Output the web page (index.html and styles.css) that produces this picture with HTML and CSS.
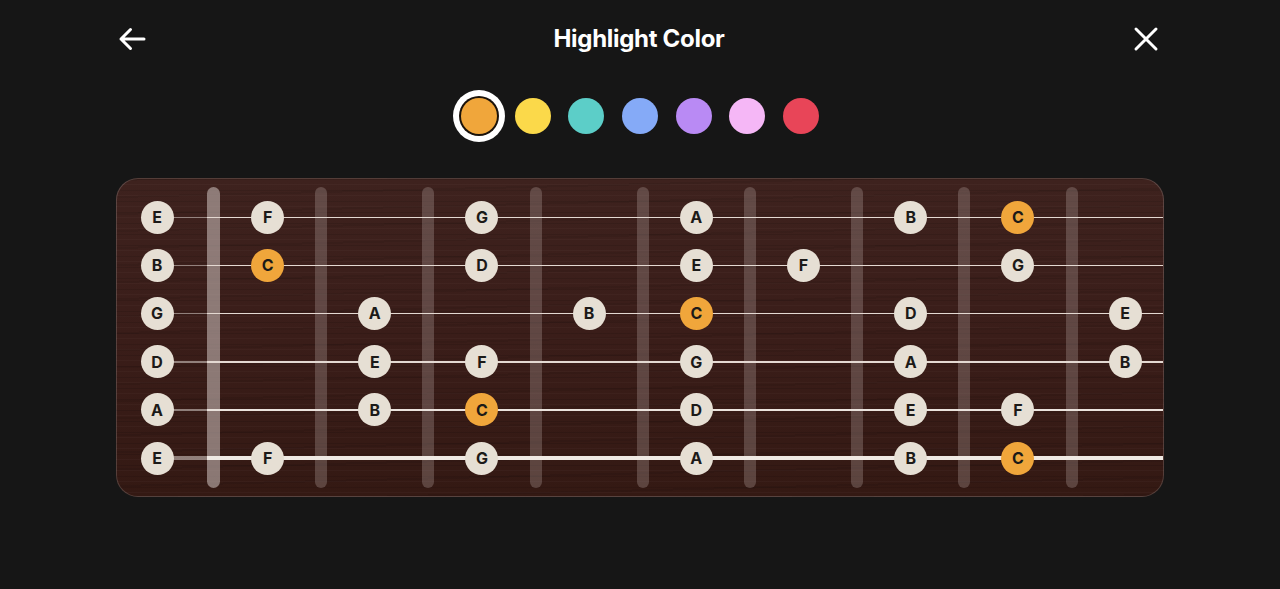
FILE: index.html
```html
<!DOCTYPE html>
<html lang="en">
<head>
<meta charset="utf-8">
<title>Highlight Color</title>
<link rel="stylesheet" href="styles.css">
</head>
<body>
<div class="screen">
  <header class="topbar">
    <button class="icon-btn" aria-label="Back">
      <svg width="30" height="26" viewBox="0 0 30 26"><path d="M27 13H4M13.5 3.5L4 13l9.5 9.5" fill="none" stroke="#fff" stroke-width="3" stroke-linecap="round" stroke-linejoin="round"/></svg>
    </button>
    <h1 class="title">Highlight Color</h1>
    <button class="icon-btn" aria-label="Close">
      <svg width="26" height="26" viewBox="0 0 26 26"><path d="M3 3l20 20M23 3L3 23" fill="none" stroke="#fff" stroke-width="3" stroke-linecap="round"/></svg>
    </button>
  </header>

  <div class="swatches">
    <span class="swatch orange selected"></span>
    <span class="swatch yellow"></span>
    <span class="swatch teal"></span>
    <span class="swatch blue"></span>
    <span class="swatch purple"></span>
    <span class="swatch pink"></span>
    <span class="swatch red"></span>
  </div>

  <div class="fretboard">
    <div class="nut"></div>
    <div class="wire w1"></div>
    <div class="wire w2"></div>
    <div class="wire w3"></div>
    <div class="wire w4"></div>
    <div class="wire w5"></div>
    <div class="wire w6"></div>
    <div class="wire w7"></div>
    <div class="wire w8"></div>

    <div class="string s1"></div>
    <div class="string s2"></div>
    <div class="string s3"></div>
    <div class="string s4"></div>
    <div class="string s5"></div>
    <div class="string s6"></div>

    <span class="note s1 f0">E</span>
    <span class="note s1 f1">F</span>
    <span class="note s1 f3">G</span>
    <span class="note s1 f5">A</span>
    <span class="note s1 f7">B</span>
    <span class="note s1 f8 hl">C</span>

    <span class="note s2 f0">B</span>
    <span class="note s2 f1 hl">C</span>
    <span class="note s2 f3">D</span>
    <span class="note s2 f5">E</span>
    <span class="note s2 f6">F</span>
    <span class="note s2 f8">G</span>

    <span class="note s3 f0">G</span>
    <span class="note s3 f2">A</span>
    <span class="note s3 f4">B</span>
    <span class="note s3 f5 hl">C</span>
    <span class="note s3 f7">D</span>
    <span class="note s3 f9">E</span>

    <span class="note s4 f0">D</span>
    <span class="note s4 f2">E</span>
    <span class="note s4 f3">F</span>
    <span class="note s4 f5">G</span>
    <span class="note s4 f7">A</span>
    <span class="note s4 f9">B</span>

    <span class="note s5 f0">A</span>
    <span class="note s5 f2">B</span>
    <span class="note s5 f3 hl">C</span>
    <span class="note s5 f5">D</span>
    <span class="note s5 f7">E</span>
    <span class="note s5 f8">F</span>

    <span class="note s6 f0">E</span>
    <span class="note s6 f1">F</span>
    <span class="note s6 f3">G</span>
    <span class="note s6 f5">A</span>
    <span class="note s6 f7">B</span>
    <span class="note s6 f8 hl">C</span>
  </div>
</div>
</body>
</html>
```

FILE: styles.css
```css
* { box-sizing: border-box; }

html, body {
  margin: 0;
  padding: 0;
  background: #161616;
}

body {
  font-family: Inter, "Noto Sans", "Liberation Sans", sans-serif;
  color: #fff;
  width: 1280px;
  height: 589px;
  overflow: hidden;
}

.topbar {
  height: 77px;
  display: flex;
  align-items: center;
  justify-content: space-between;
  padding: 0 119px 0 117px;
}

.icon-btn {
  background: none;
  border: 0;
  padding: 0;
  width: 30px;
  height: 26px;
  display: flex;
  align-items: center;
  justify-content: center;
  cursor: pointer;
}

.title {
  margin: 0;
  font-size: 24px;
  font-weight: 700;
  letter-spacing: -0.3px;
  color: #fff;
}

.swatches {
  margin-top: 13px;
  height: 52px;
  display: flex;
  align-items: center;
  justify-content: center;
  gap: 17.6px;
}

.swatch {
  width: 36px;
  height: 36px;
  border-radius: 50%;
  display: block;
}
.swatch.selected {
  box-shadow: 0 0 0 2px #1a120a, 0 0 0 8px #fff;
}
.orange { background: #f0a63b; }
.yellow { background: #fbd94a; }
.teal { background: #5ccec8; }
.blue { background: #85aaf7; }
.purple { background: #b98af4; }
.pink { background: #f5b7f6; }
.red { background: #e84558; }

.fretboard {
  margin: 36px auto 0;
  width: 1048px;
  height: 319px;
  border: 1px solid rgba(255, 255, 255, 0.16);
  border-radius: 22px;
  overflow: hidden;
  padding: 14px 0 0;
  display: grid;
  grid-template-columns: 80px 10px 13px repeat(9, 95.2px 12px);
  grid-template-rows: repeat(6, 48.2px);
  background-color: #3a1e1b;
  background-image:
    repeating-linear-gradient(180deg, rgba(0,0,0,0.10) 0 1px, transparent 1px 5px, rgba(255,255,255,0.025) 5px 6px, transparent 6px 11px),
    repeating-linear-gradient(178.6deg, rgba(0,0,0,0.07) 0 2px, transparent 2px 17px),
    linear-gradient(180deg, #3e221e 0%, #3a1d19 50%, #341913 100%);
}

.nut, .wire {
  grid-row: 1 / -1;
  margin: -6px 0 -6px;
  border-radius: 7px;
}
.nut {
  grid-column: 3;
  background: rgba(196, 184, 180, 0.6);
}
.wire {
  width: 12px;
  background: rgba(185, 170, 165, 0.3);
}
.w1 { grid-column: 5; }
.w2 { grid-column: 7; }
.w3 { grid-column: 9; }
.w4 { grid-column: 11; }
.w5 { grid-column: 13; }
.w6 { grid-column: 15; }
.w7 { grid-column: 17; }
.w8 { grid-column: 19; }

.string {
  grid-column: 1 / -1;
  align-self: center;
  margin-left: 40px;
  background: linear-gradient(90deg, rgba(205, 195, 190, 0.6) 0 50px, #e4d9d2 50px);
}
.string.s1 { height: 1px; }
.string.s2 { height: 1.5px; }
.string.s3 { height: 1.7px; }
.string.s4 { height: 2px; }
.string.s5 { height: 2.6px; background: linear-gradient(90deg, rgba(205, 195, 190, 0.6) 0 50px, #ebe3dd 50px); }
.string.s6 { height: 3.2px; background: linear-gradient(90deg, rgba(205, 195, 190, 0.6) 0 50px, #efe9e3 50px); }

.s1 { grid-row: 1; }
.s2 { grid-row: 2; }
.s3 { grid-row: 3; }
.s4 { grid-row: 4; }
.s5 { grid-row: 5; }
.s6 { grid-row: 6; }

.note {
  width: 33px;
  height: 33px;
  border-radius: 50%;
  background: #e6dfd4;
  color: #1c1a18;
  font-size: 16px;
  font-weight: 700;
  display: flex;
  align-items: center;
  justify-content: center;
  align-self: center;
  justify-self: center;
  z-index: 1;
  line-height: 1;
}
.note.hl { background: #f0a63b; }

.f0 { grid-column: 1; justify-self: start; margin-left: 23.5px; }
.f1 { grid-column: 4; }
.f2 { grid-column: 6; }
.f3 { grid-column: 8; }
.f4 { grid-column: 10; }
.f5 { grid-column: 12; }
.f6 { grid-column: 14; }
.f7 { grid-column: 16; }
.f8 { grid-column: 18; }
.f9 { grid-column: 20; }
```
